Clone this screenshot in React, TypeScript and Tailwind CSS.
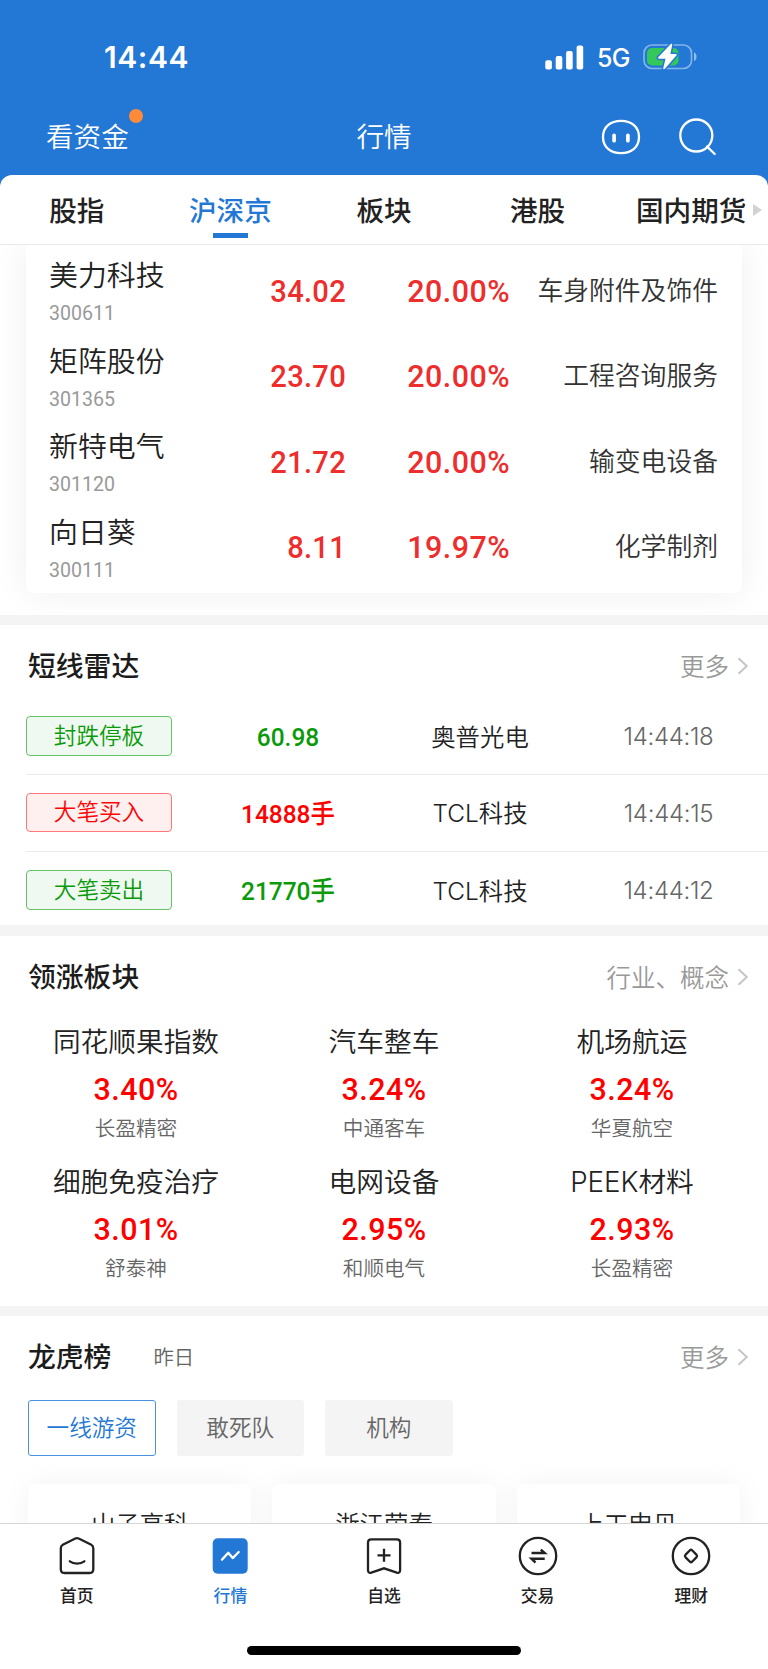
import React from "react";

const stocks = [
  { name: "美力科技", code: "300611", price: "34.02", pct: "20.00%", industry: "车身附件及饰件" },
  { name: "矩阵股份", code: "301365", price: "23.70", pct: "20.00%", industry: "工程咨询服务" },
  { name: "新特电气", code: "301120", price: "21.72", pct: "20.00%", industry: "输变电设备" },
  { name: "向日葵", code: "300111", price: "8.11", pct: "19.97%", industry: "化学制剂" },
];

const radar = [
  { tag: "封跌停板", value: "60.98", stock: "奥普光电", time: "14:44:18", up: false },
  { tag: "大笔买入", value: "14888手", stock: "TCL科技", time: "14:44:15", up: true },
  { tag: "大笔卖出", value: "21770手", stock: "TCL科技", time: "14:44:12", up: false },
];

const sectors = [
  { name: "同花顺果指数", pct: "3.40%", lead: "长盈精密" },
  { name: "汽车整车", pct: "3.24%", lead: "中通客车" },
  { name: "机场航运", pct: "3.24%", lead: "华夏航空" },
  { name: "细胞免疫治疗", pct: "3.01%", lead: "舒泰神" },
  { name: "电网设备", pct: "2.95%", lead: "和顺电气" },
  { name: "PEEK材料", pct: "2.93%", lead: "长盈精密" },
];

function StatusBar() {
  return (
    <div className="flex h-[107px] items-center justify-between pt-[7px] pr-[70px] pl-[104px] text-white">
      <span className="text-[30px] leading-none font-semibold tracking-[0.600px]">14:44</span>
      <div className="flex items-center">
        <svg width="39" height="25" viewBox="0 0 39 25" fill="currentColor">
          <rect x="0.3" y="15.2" width="6.6" height="9.3" rx="2" />
          <rect x="10.7" y="11" width="6.6" height="13.5" rx="2" />
          <rect x="21.1" y="6" width="6.6" height="18.5" rx="2" />
          <rect x="31.6" y="0.5" width="6.6" height="24" rx="2" />
        </svg>
        <span className="ml-[13px] w-[33px] pt-[3px] text-[25px] leading-none font-medium tracking-[-0.6px]">5G</span>
        <svg className="ml-[13px]" width="55" height="28" viewBox="0 0 55 28">
          <rect x="1" y="2" width="47.5" height="23.5" rx="8" fill="none" stroke="#fff" strokeOpacity=".45" strokeWidth="1.6" />
          <path d="M51 9.5c3.4 1 3.4 7.5 0 8.5z" fill="#fff" fillOpacity=".5" />
          <rect x="4" y="5" width="31.5" height="17.5" rx="5" fill="#34c759" />
          <path
            d="M27.600 1.200 15.400 14.100c-.7.8-.3 1.600.6 1.600h6.500l-2.200 9.300c-.3 1.300.8 1.700 1.600.8l11.500-13.400c.7-.8.3-1.500-.6-1.500h-5.400L29.200 2c.3-1.300-.8-1.700-1.600-.8z"
            fill="#fff"
            stroke="#2478d5"
            strokeWidth="3"
            paintOrder="stroke"
          />
        </svg>
      </div>
    </div>
  );
}

function TopBar() {
  return (
    <div className="grid h-[60px] grid-cols-3 items-center text-[27.6px] leading-none text-white">
      <div className="flex pt-[2px] pl-[46px]">
        <span className="relative">
          看资金
          <i className="absolute -top-[15px] -right-[14px] size-[14px] rounded-full bg-[#ff8a3a]" />
        </span>
      </div>
      <span className="pt-[2px] text-center">行情</span>
      <div className="flex items-center justify-end pr-[51px]">
        <svg width="40" height="36" viewBox="0 0 40 36" fill="none" stroke="currentColor">
          <path
            d="M20 1.800C30.500 1.800 38 7.800 38 18S30.500 34.200 20 34.200 2 28.200 2 18 9.500 1.800 20 1.800z"
            strokeWidth="2.3"
          />
          <path d="M13.100 16.300v5.400M26.900 16.300v5.400" strokeWidth="3.700" strokeLinecap="round" />
        </svg>
        <svg className="ml-[37px]" width="39" height="39" viewBox="0 0 39 39" fill="none" stroke="currentColor" strokeWidth="2.3">
          <circle cx="18.300" cy="17.500" r="16" />
          <path d="M29 28.500l7.700 7.500" strokeLinecap="round" />
        </svg>
      </div>
    </div>
  );
}

function Tabs() {
  return (
    <div className="h-[70px] shrink-0 bg-[#2478d5]">
      <div className="relative grid h-[70px] grid-cols-5 rounded-t-[12px] border-b border-[#e9e9e9] bg-white text-[27.6px] font-medium text-[#222]">
        {["股指", "沪深京", "板块", "港股", "国内期货"].map((t, i) => (
          <div
            key={t}
            className={
              i === 1
                ? "flex flex-col items-center whitespace-nowrap text-[#2478d5]"
                : "flex flex-col items-center whitespace-nowrap"
            }
          >
            <span className="mt-[17px] leading-[38px]">{t}</span>
            {i === 1 && <i className="mt-[3px] h-[5px] w-[35px] bg-[#2478d5]" />}
          </div>
        ))}
        <svg className="absolute top-[29px] right-[6px]" width="9" height="12" viewBox="0 0 9 12">
          <path d="M0 0l9 6-9 6z" fill="#d2d2d2" />
        </svg>
      </div>
    </div>
  );
}

function SectionHead({ title, note, more }: { title: string; note?: string; more: string }) {
  return (
    <div className="flex h-[40px] items-center pr-[19px] pl-[28px] leading-none">
      <span className="pt-[2px] text-[27.8px] font-medium text-[#1c1c1c]">{title}</span>
      {note && <span className="ml-[42px] pt-[2px] text-[20.400px] text-[#666]">{note}</span>}
      <span className="ml-auto pt-[2px] text-[24.5px] text-[#999]">{more}</span>
      <svg className="ml-[8px]" width="12" height="18" viewBox="0 0 12 18" fill="none" stroke="#c4c4c4" strokeWidth="1.9">
        <path d="M1.500 1.200 9.800 9l-8.300 7.800" />
      </svg>
    </div>
  );
}

function StockCard() {
  return (
    <div className="h-[369.500px] shrink-0 overflow-hidden bg-white px-[26px]">
      <div className="h-[348px] rounded-b-[7px] bg-white pt-[3px] shadow-[0_0_36px_rgba(0,0,0,0.065)]">
        {stocks.map((s) => (
          <div key={s.code} className="grid h-[85.500px] grid-cols-[126px_170px_164px_1fr] items-center pr-[24px] pl-[23px]">
            <div className="flex h-full flex-col pt-[9px]">
              <span className="text-[28.900px] leading-[38px] whitespace-nowrap text-[#222]">{s.name}</span>
              <span className="mt-[3px] origin-left scale-x-[.95] font-[Roboto] text-[20.600px] leading-[31px] font-normal text-[#999]">
                {s.code}
              </span>
            </div>
            <span className="-mr-[1px] origin-right scale-x-[.91] text-right font-[Roboto] text-[32px] leading-none font-medium tracking-[0.300px] text-[#ee2d2d]">
              {s.price}
            </span>
            <span className="-mr-[1px] origin-right scale-x-[.95] text-right font-[Roboto] text-[32px] leading-none font-medium tracking-[0.500px] text-[#ee2d2d]">
              {s.pct}
            </span>
            <span className="text-right text-[25.800px] leading-none whitespace-nowrap text-[#333]">{s.industry}</span>
          </div>
        ))}
      </div>
    </div>
  );
}

function Radar() {
  return (
    <section className="h-[300px] shrink-0 pt-[21px]">
      <SectionHead title="短线雷达" more="更多" />
      <div className="mt-[12px] ml-[26px]">
        {radar.map((r, i) => (
          <div
            key={r.tag}
            className={
              "grid h-[76.800px] grid-cols-[166px_192px_192px_1fr] items-center leading-none " +
              (i < 2 ? "border-b border-[#ebebeb]" : "")
            }
          >
            <span
              className={
                "flex h-[39.500px] w-[146px] items-center justify-center rounded-[4px] border text-[22.600px] " +
                (r.up ? "border-[#ff7777] bg-[#fff0f0] text-[#fb0505]" : "border-[#66c266] bg-[#f0f9f1] text-[#0a9a0a]")
              }
            >
              {r.tag}
            </span>
            <span
              className={
                "scale-x-[.93] pt-[2px] text-center font-[Roboto,'Noto_Sans_CJK_SC',sans-serif] text-[26.300px] font-medium " +
                (r.up ? "text-[#ff0000]" : "text-[#0a9a0a]")
              }
            >
              {r.value}
            </span>
            <span className="pt-[2px] text-center text-[24.400px] text-[#222]">{r.stock}</span>
            <span className="pt-[3px] pr-[7px] text-center text-[24px] tracking-[-0.300px] text-[#666]">{r.time}</span>
          </div>
        ))}
      </div>
    </section>
  );
}

function Sectors() {
  return (
    <section className="h-[370px] shrink-0 pt-[21px]">
      <SectionHead title="领涨板块" more="行业、概念" />
      <div className="mt-[24px] grid grid-cols-3 px-[12px] text-center">
        {sectors.map((s) => (
          <div key={s.name} className="flex h-[139.700px] flex-col">
            <span className="text-[27.700px] leading-[42px] text-[#222]">{s.name}</span>
            <span className="scale-x-[.95] font-[Roboto] text-[32px] leading-[52px] font-medium tracking-[0.500px] text-[#ff0000]">
              {s.pct}
            </span>
            <span className="text-[20.600px] leading-[28px] text-[#666]">{s.lead}</span>
          </div>
        ))}
      </div>
    </section>
  );
}

function DragonBoard() {
  return (
    <section className="shrink-0 pt-[21px]">
      <SectionHead title="龙虎榜" note="昨日" more="更多" />
      <div className="mt-[23px] flex gap-[21px] pl-[28px] text-[22.600px] leading-none text-[#666]">
        <span className="flex h-[56px] w-[127.500px] items-center justify-center rounded-[3px] border border-[#4a92e2] text-[#2478d5]">
          一线游资
        </span>
        <span className="flex h-[56px] w-[127.500px] items-center justify-center rounded-[3px] bg-[#f4f4f4]">敢死队</span>
        <span className="flex h-[56px] w-[127.500px] items-center justify-center rounded-[3px] bg-[#f4f4f4]">机构</span>
      </div>
      <div className="mt-[28px] grid grid-cols-3 gap-[21px] px-[28px]">
        {["山子高科", "浙江荣泰", "上工申贝"].map((n) => (
          <div
            key={n}
            className="h-[150px] rounded-[7px] bg-white pt-[20px] text-center text-[24.400px] leading-[40px] text-[#222] shadow-[0_0_30px_rgba(0,0,0,0.05)]"
          >
            {n}
          </div>
        ))}
      </div>
    </section>
  );
}

const navIcons = [
  <>
    <path d="M18.300 2.500q1.700-.9 3.400 0l12.600 6.300q2 1.200 2 3.500v21q0 3.700-3.700 3.700H7.500q-3.700 0-3.700-3.700v-21q0-2.300 2-3.500z" />
    <path d="M12.800 25.300c4 3 10.600 3 14.600 0" strokeLinecap="round" />
  </>,
  <>
    <rect x="2.700" y="2.300" width="35" height="35.500" rx="5" fill="#2478d5" stroke="none" />
    <path d="M12 23.600l6.300-6.800 4.400 5.300 6-6.100" stroke="#fff" strokeLinecap="round" strokeLinejoin="round" />
  </>,
  <>
    <path d="M7.300 3.300h25.500q3.300 0 3.300 3.300V34q0 3.500-3.300 2.600L20 32.300 7.300 36.600Q4 37.500 4 34V6.600q0-3.300 3.300-3.300z" />
    <path d="M20 12.800v13M13.500 19.300h13" />
  </>,
  <>
    <circle cx="20" cy="20" r="18.200" />
    <path d="M13.500 17h13.200L22.800 13.600M26.700 22.800H13.500l4 3.700" strokeWidth="2.400" />
  </>,
  <>
    <circle cx="20" cy="20" r="18.200" />
    <path d="M18.900 14.300q1.100-1 2.200 0l4.500 4.600q1 1.100 0 2.200l-4.500 4.600q-1.100 1-2.200 0l-4.500-4.600q-1-1.100 0-2.200z" />
  </>,
];

function BottomNav() {
  return (
    <nav className="flex h-[146px] shrink-0 flex-col items-center border-t border-[#d6d6d6] bg-white">
      <div className="grid w-full grid-cols-5 pt-[12px]">
        {["首页", "行情", "自选", "交易", "理财"].map((n, i) => (
          <div
            key={n}
            className={"flex flex-col items-center font-medium " + (i === 1 ? "text-[#2478d5]" : "text-[#222]")}
          >
            <svg width="40" height="40" viewBox="0 0 40 40" fill="none" stroke="currentColor" strokeWidth="2.300">
              {navIcons[i]}
            </svg>
            <span className="mt-[8px] text-[16.800px] leading-[24px]">{n}</span>
          </div>
        ))}
      </div>
      <div className="mt-[38px] h-[9px] w-[274px] rounded-full bg-black" />
    </nav>
  );
}

export default function App() {
  return (
    <div className="flex h-[1669px] w-[768px] flex-col overflow-hidden bg-white font-[Inter,'Noto_Sans_CJK_SC',sans-serif] font-[350]">
      <header className="h-[175px] shrink-0 bg-[#2478d5]">
        <StatusBar />
        <TopBar />
      </header>
      <Tabs />
      <main className="flex min-h-0 flex-1 flex-col overflow-hidden">
        <StockCard />
        <div className="h-[10.500px] shrink-0 bg-[#f4f4f4]" />
        <Radar />
        <div className="h-[11px] shrink-0 bg-[#f4f4f4]" />
        <Sectors />
        <div className="h-[10px] shrink-0 bg-[#f4f4f4]" />
        <DragonBoard />
      </main>
      <BottomNav />
    </div>
  );
}
